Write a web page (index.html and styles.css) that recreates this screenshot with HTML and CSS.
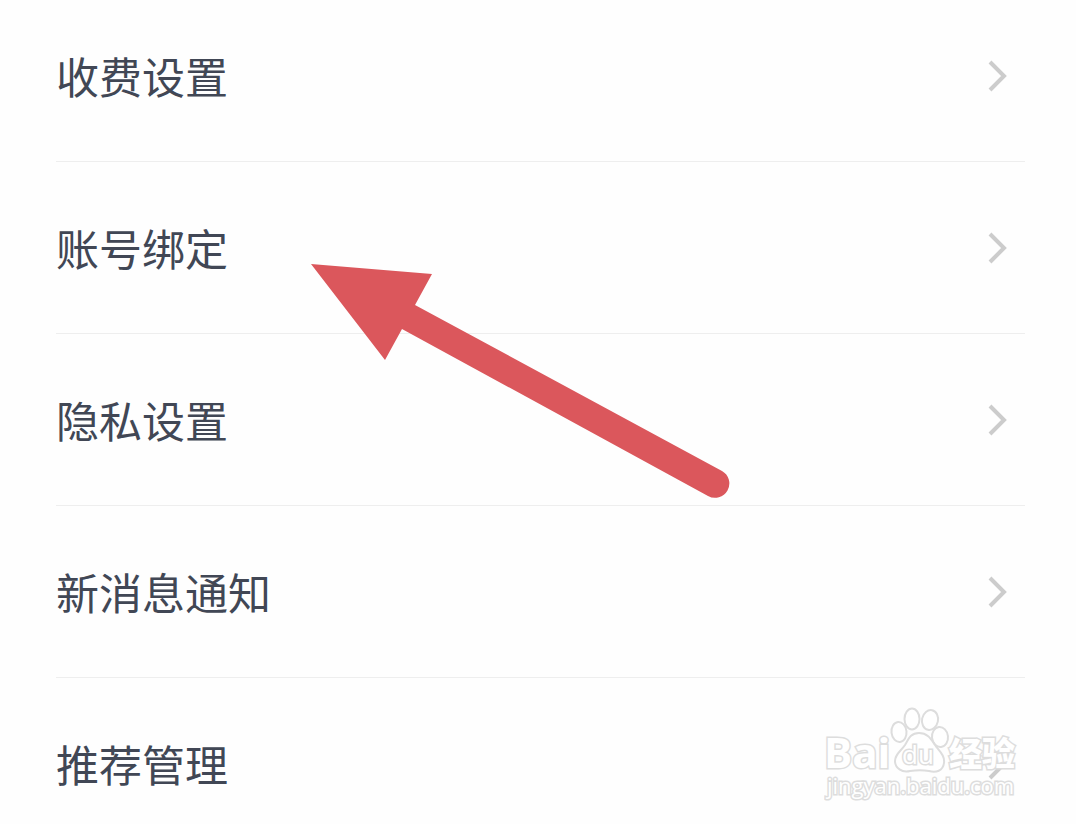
FILE: index.html
```
<!DOCTYPE html>
<html lang="zh-CN">
<head>
    <meta charset="UTF-8">
    <meta name="viewport" content="width=device-width, initial-scale=1.0">
    <title>设置</title>
    <link rel="stylesheet" href="styles.css">
</head>
<body>
    <nav class="settings-list">
        <a class="settings-item" href="#">
            <span class="label">收费设置</span>
            <svg class="chevron" viewBox="0 0 20 32"><path d="M2 2 L16 16 L2 30" /></svg>
        </a>
        <a class="settings-item" href="#">
            <span class="label">账号绑定</span>
            <svg class="chevron" viewBox="0 0 20 32"><path d="M2 2 L16 16 L2 30" /></svg>
        </a>
        <a class="settings-item" href="#">
            <span class="label">隐私设置</span>
            <svg class="chevron" viewBox="0 0 20 32"><path d="M2 2 L16 16 L2 30" /></svg>
        </a>
        <a class="settings-item" href="#">
            <span class="label">新消息通知</span>
            <svg class="chevron" viewBox="0 0 20 32"><path d="M2 2 L16 16 L2 30" /></svg>
        </a>
        <a class="settings-item" href="#">
            <span class="label">推荐管理</span>
            <svg class="chevron" viewBox="0 0 20 32"><path d="M2 2 L16 16 L2 30" /></svg>
        </a>
    </nav>

    <!-- Arrow pointing at the account binding item -->
    <svg class="arrow" viewBox="0 0 420 236">
        <path d="M0 0 L121 10 L104 41 L411 207 A14 14 0 0 1 397 232 L91 65 L74 96 Z" />
    </svg>

    <!-- Watermark -->
    <svg class="watermark" viewBox="0 0 200 100">
        <text class="brand" x="0" y="61">Bai</text>
        <ellipse cx="75" cy="25" rx="7.5" ry="10" transform="rotate(-6 75 25)" />
        <ellipse cx="88" cy="12" rx="7.5" ry="10.5" />
        <ellipse cx="106" cy="13" rx="8" ry="10" transform="rotate(12 106 13)" />
        <ellipse cx="116" cy="30" rx="8" ry="10" transform="rotate(-6 116 30)" />
        <path d="M95 26 C104 26 107 32 111 38 C115 44 121 48 120 56 C119 64 112 66 105 64 C99 63 93 63 86 64 C78 66 71 61 71 54 C71 47 77 44 81 38 C85 31 87 26 95 26 Z" />
        <text class="du" x="78" y="57">du</text>
        <text class="cn" x="125" y="59">经验</text>
        <text class="url" x="3" y="87">jingyan.baidu.com</text>
    </svg>
</body>
</html>
```
FILE: styles.css
```
body {
    position: relative;
    height: 100vh;
    margin: 0;
    overflow: hidden;
    background-color: #fefefe;
    font-family: "Noto Sans CJK SC", sans-serif;
}
.settings-list {
    margin: -10px 51px 0 56px;
}
.settings-item {
    display: flex;
    justify-content: space-between;
    align-items: center;
    box-sizing: border-box;
    height: 172px;
    padding-right: 17px;
    border-bottom: 1px solid #eeeeee;
    color: #414755;
    font-size: 43px;
    line-height: 64px;
    text-decoration: none;
}
.label {
    padding-bottom: 2px;
}
.chevron {
    width: 20px;
    height: 32px;
    fill: none;
    stroke: #cccccc;
    stroke-width: 4px;
}
.arrow {
    position: absolute;
    top: 264px;
    left: 311px;
    width: 420px;
    height: 236px;
    fill: #db575c;
}
.watermark {
    position: absolute;
    right: 52px;
    bottom: 17px;
    width: 200px;
    height: 100px;
    fill: #ffffff;
    stroke: #dddddd;
    stroke-width: 2px;
}
.watermark text {
    font-family: "Open Sans", "Noto Sans CJK SC", sans-serif;
    stroke-width: 3px;
    paint-order: stroke;
}
.watermark .brand {
    font-size: 42px;
    font-weight: bold;
}
.watermark .du {
    font-size: 26px;
}
.watermark .cn {
    font-size: 33px;
    font-weight: 900;
}
.watermark .url {
    font-size: 22px;
}
```
